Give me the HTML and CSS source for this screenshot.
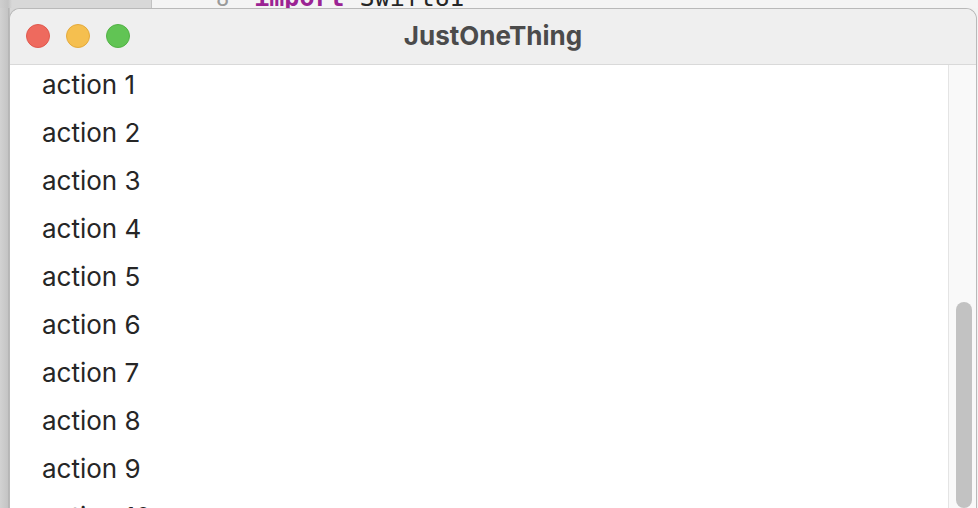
FILE: index.html
```html
<!DOCTYPE html>
<html>
<head>
<meta charset="utf-8">
<link rel="stylesheet" href="styles.css">
</head>
<body>
<div class="stage">
  <div class="backdrop">
    <div class="navigator"></div>
    <div class="editor"><span class="ln">8</span><span class="kw">import</span> SwiftUI</div>
  </div>
  <div class="row">
    <div class="window">
      <div class="titlebar">
        <div class="lights">
          <span class="light red"></span>
          <span class="light yellow"></span>
          <span class="light green"></span>
        </div>
        <div class="title">JustOneThing</div>
      </div>
      <div class="body">
        <div class="list">
          <div class="item">action 1</div>
          <div class="item">action 2</div>
          <div class="item">action 3</div>
          <div class="item">action 4</div>
          <div class="item">action 5</div>
          <div class="item">action 6</div>
          <div class="item">action 7</div>
          <div class="item">action 8</div>
          <div class="item">action 9</div>
          <div class="item">action 10</div>
        </div>
        <div class="scrollbar"><div class="thumb"></div></div>
      </div>
    </div>
  </div>
</div>
</body>
</html>
```
FILE: styles.css
```css
html, body {
  margin: 0;
  padding: 0;
  width: 978px;
  height: 508px;
  overflow: hidden;
}
body {
  background: #cbcbcb;
  font-family: Inter, "Noto Sans", sans-serif;
}
.stage {
  width: 978px;
  height: 508px;
  display: flex;
  flex-direction: column;
  background: linear-gradient(90deg, #d2d2d2 0, #c4c4c4 8px, #a8a8a8 9px, #d8d8d8 10px, #d8d8d8 152px, #f3f3f3 153px);
}
.backdrop {
  height: 8px;
  display: flex;
  overflow: hidden;
  flex: none;
}
.navigator {
  width: 151px;
  border-right: 1px solid #c2c2c2;
  background: linear-gradient(90deg, #cfcfcf 0, #c4c4c4 8px, #d8d8d8 12px);
}
.editor {
  flex: 1;
  background: #f4f4f4;
  font-family: "DejaVu Sans Mono", "Liberation Mono", monospace;
  font-size: 25px;
  line-height: 25px;
  margin-top: -15px;
  height: 23px;
  color: #262626;
  padding-left: 64px;
  white-space: pre;
}
.ln {
  color: #9a9a9a;
  font-size: 22px;
  margin-right: 25px;
}
.kw {
  color: #9b2393;
  font-weight: bold;
}
.row {
  flex: 1;
  display: flex;
  padding-left: 9px;
  padding-right: 1px;
  min-height: 0;
}
.window {
  flex: 1;
  display: flex;
  flex-direction: column;
  border: 1px solid #b9b9b9;
  border-bottom: none;
  border-radius: 11px 11px 0 0;
  overflow: hidden;
  background: #ffffff;
}
.titlebar {
  height: 55px;
  flex: none;
  background: #efefef;
  border-bottom: 1px solid #d9d9d9;
  display: flex;
  align-items: center;
  position: relative;
}
.lights {
  display: flex;
  gap: 16px;
  padding-left: 16px;
  margin-top: -2px;
}
.light {
  width: 24px;
  height: 24px;
  border-radius: 50%;
  box-sizing: border-box;
}
.red { background: #ee6a5e; border: 1px solid #e0594e; }
.yellow { background: #f5bf4f; border: 1px solid #e4aa3c; }
.green { background: #61c454; border: 1px solid #52b245; }
.title {
  position: absolute;
  left: 0;
  right: 0;
  top: 0;
  bottom: 0;
  display: flex;
  align-items: center;
  justify-content: center;
  font-weight: 700;
  font-size: 26px;
  color: #4b4b4b;
  letter-spacing: 0;
  margin-top: -3px;
  pointer-events: none;
}
.body {
  flex: 1;
  display: flex;
  min-height: 0;
  overflow: hidden;
}
.list {
  flex: 1;
  margin-top: -5px;
}
.item {
  height: 48px;
  display: flex;
  align-items: center;
  padding-left: 32px;
  font-size: 26px;
  color: #262626;
}
.scrollbar {
  width: 28px;
  flex: none;
  background: #f9f9f9;
  border-left: 1px solid #e4e4e4;
  display: flex;
  flex-direction: column;
  padding-top: 237px;
  box-sizing: border-box;
  padding-left: 7px;
}
.thumb {
  width: 16px;
  height: 260px;
  border-radius: 8px;
  background: #c2c2c2;
}
```
